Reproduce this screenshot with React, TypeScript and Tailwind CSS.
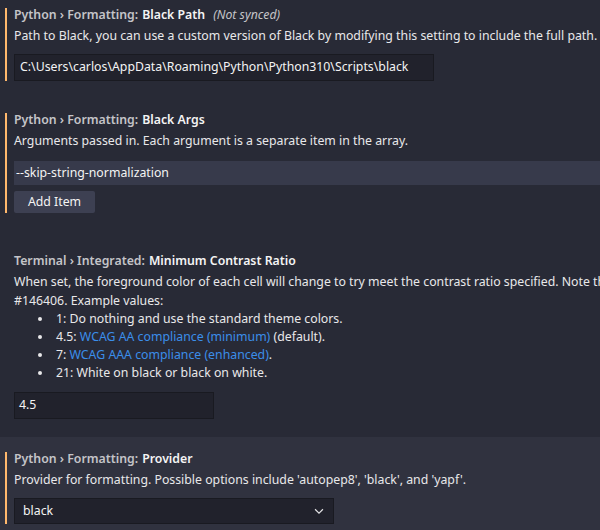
import React from 'react';

const font = { fontFamily: '"Noto Sans", "Open Sans", sans-serif' };

interface TitleProps {
  category: string;
  name: string;
  note?: string;
}

const SettingTitle: React.FC<TitleProps> = ({ category, name, note }) => (
  <div className="flex items-center h-[14px] text-[12.3px] leading-[14px] font-semibold whitespace-nowrap">
    <span className="text-[#c4c4c8]">{category}</span>
    <span className="text-[#f4f4f4] ml-[4px]">{name}</span>
    {note && <span className="ml-[8px] font-normal italic text-[#c4c4c8]">{note}</span>}
  </div>
);

const Desc: React.FC<{ children: React.ReactNode; className?: string }> = ({ children, className }) => (
  <div className={'text-[12.3px] leading-[18px] text-[#e8e8ea] whitespace-nowrap ' + (className ?? '')}>{children}</div>
);

const Link: React.FC<{ children: React.ReactNode }> = ({ children }) => (
  <span className="text-[#3b8eea]">{children}</span>
);

export default function App() {
  return (
    <div className="w-[600px] h-[530px] overflow-hidden bg-[#282a36] pt-[8px]" style={font}>
      {/* Black Path */}
      <div className="pl-[5px]">
        <div className="border-l-2 border-[#ffb86c] pl-[7px]">
          <SettingTitle category="Python › Formatting:" name="Black Path" note="(Not synced)" />
          <Desc className="mt-[5px]">
            Path to Black, you can use a custom version of Black by modifying this setting to include the full path.
          </Desc>
          <div className="mt-[9px] w-[420px] h-[27px] bg-[#21222c] border border-[#191a21] flex items-center pl-[5px] text-[12.3px] text-[#f4f4f4] whitespace-nowrap">
            C:\Users\carlos\AppData\Roaming\Python\Python310\Scripts\black
          </div>
        </div>
      </div>

      {/* Black Args */}
      <div className="pl-[5px] mt-[32px]">
        <div className="border-l-2 border-[#ffb86c] pl-[7px]">
          <SettingTitle category="Python › Formatting:" name="Black Args" />
          <Desc className="mt-[5px]">Arguments passed in. Each argument is a separate item in the array.</Desc>
          <div className="mt-[11px] w-[700px] h-[24px] bg-[#373a4b] flex items-center pl-[2px] text-[12.3px] text-[#f4f4f4]">
            --skip-string-normalization
          </div>
          <button className="mt-[6px] w-[81px] h-[22px] bg-[#3d4052] rounded-[2px] text-[12.3px] text-[#f4f4f4] flex items-center justify-center">
            Add Item
          </button>
        </div>
      </div>

      {/* Minimum Contrast Ratio */}
      <div className="pl-[5px] mt-[41px]">
        <div className="border-l-2 border-transparent pl-[7px]">
          <SettingTitle category="Terminal › Integrated:" name="Minimum Contrast Ratio" />
          <div className="mt-[4px] text-[12.3px] leading-[19px] text-[#e8e8ea] whitespace-nowrap">
            <div>
              When set, the foreground color of each cell will change to try meet the contrast ratio specified. Note that this will not apply to `powerline` characters per
            </div>
            <div>#146406. Example values:</div>
          </div>
          <ul className="text-[12.3px] leading-[18px] text-[#e8e8ea] whitespace-nowrap">
            {[
              <>1: Do nothing and use the standard theme colors.</>,
              <>4.5: <Link>WCAG AA compliance (minimum)</Link> (default).</>,
              <>7: <Link>WCAG AAA compliance (enhanced)</Link>.</>,
              <>21: White on black or black on white.</>,
            ].map((item, i) => (
              <li key={i} className="flex items-center">
                <span className="w-[42px] flex justify-end pr-[14px]">
                  <span className="w-[4px] h-[4px] rounded-full bg-[#e8e8ea]" />
                </span>
                <span>{item}</span>
              </li>
            ))}
          </ul>
          <div className="mt-[10px] w-[200px] h-[27px] bg-[#21222c] border border-[#191a21] flex items-center pl-[4px] text-[12.3px] text-[#f4f4f4]">
            4.5
          </div>
        </div>
      </div>

      {/* Provider */}
      <div className="mt-[18px] bg-[#30323f] pt-[15px] pl-[5px] h-[200px]">
        <div className="border-l-2 border-[#ffb86c] pl-[7px]">
          <SettingTitle category="Python › Formatting:" name="Provider" />
          <Desc className="mt-[5px]">Provider for formatting. Possible options include 'autopep8', 'black', and 'yapf'.</Desc>
          <div className="mt-[9px] w-[320px] h-[26px] bg-[#21222c] border border-[#191a21] flex items-center justify-between pl-[8px] pr-[7px] text-[12.3px] text-[#f4f4f4]">
            <span>black</span>
            <svg width="14" height="14" viewBox="0 0 16 16" fill="none" stroke="#e4e4e6" strokeWidth="1.3">
              <path d="M3.5 6l4.5 4.5L12.5 6" />
            </svg>
          </div>
        </div>
      </div>
    </div>
  );
}
